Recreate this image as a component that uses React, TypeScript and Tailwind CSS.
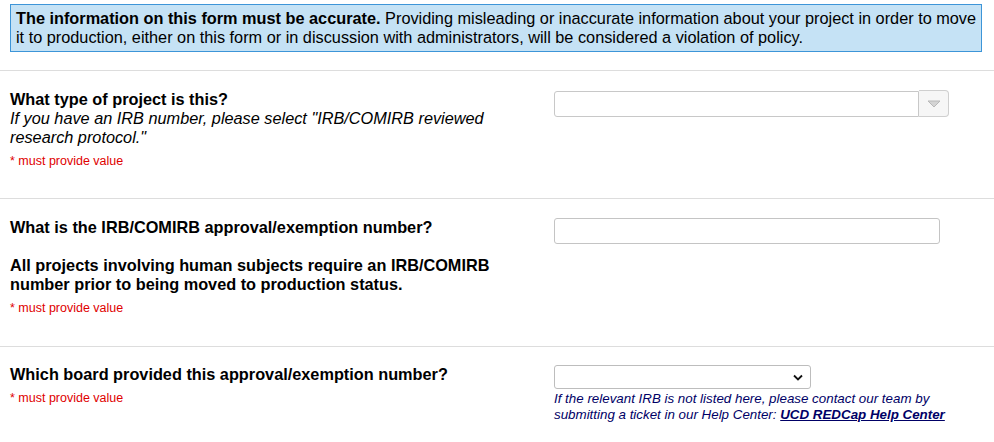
import React from 'react';

function Required() {
  return <div className="mt-[7px] text-[12.5px] leading-[15px] text-[#e00000]">* must provide value</div>;
}

export default function App() {
  return (
    <div className="min-h-[442px] bg-white font-['Liberation_Sans',Arial,sans-serif] text-black">
      <div className="pt-[4px] pl-[10px] pr-[12px]">
        <div className="overflow-hidden whitespace-nowrap border border-[#3d95d8] bg-[#c5e2f5] px-[5px] py-[4px] text-[16.3px] leading-[19px] text-black">
          <b>The information on this form must be accurate.</b> Providing misleading or inaccurate information about your project in order to move
          <br />
          it to production, either on this form or in discussion with administrators, will be considered a violation of policy.
        </div>
      </div>

      <div className="mt-[18px] border-t border-[#dddddd]" />

      {/* project type */}
      <div className="flex pt-[19px] pb-[29px]">
        <div className="w-[554px] shrink-0 pl-[10px] pr-[60px] text-[16.3px] leading-[19px]">
          <div className="font-bold">What type of project is this?</div>
          <div className="italic">If you have an IRB number, please select "IRB/COMIRB reviewed research protocol."</div>
          <Required />
        </div>
        <div className="flex items-start pt-[1px]">
          <div className="h-[26px] w-[365px] rounded-l-[3px] border border-[#c8c8c8] bg-white" />
          <div className="flex h-[27px] w-[30px] -mt-[1px] items-center justify-center rounded-r-[4px] border border-l-0 border-[#cfcfcf] bg-[#f6f6f6]">
            <svg width="14" height="8" viewBox="0 0 14 8">
              <path d="M1 1 L13 1 L7 7 Z" fill="#d4d4d4" stroke="#b8b8b8" strokeWidth="1" strokeLinejoin="round" />
            </svg>
          </div>
        </div>
      </div>

      <div className="border-t border-[#dddddd]" />

      {/* irb number */}
      <div className="flex pt-[19px] pb-[30px]">
        <div className="w-[554px] shrink-0 pl-[10px] pr-[40px] text-[16.3px] font-bold leading-[19px]">
          <div>What is the IRB/COMIRB approval/exemption number?</div>
          <div className="mt-[19px]">All projects involving human subjects require an IRB/COMIRB number prior to being moved to production status.</div>
          <div className="font-normal">
            <Required />
          </div>
        </div>
        <div>
          <div className="h-[26px] w-[386px] rounded-[3px] border border-[#c4c4c4] bg-white" />
        </div>
      </div>

      <div className="border-t border-[#dddddd]" />

      {/* board */}
      <div className="flex pt-[18px] pb-[10px]">
        <div className="w-[554px] shrink-0 pl-[10px] text-[16.3px] leading-[19px]">
          <div className="font-bold">Which board provided this approval/exemption number?</div>
          <div className="mt-[1px]">
            <Required />
          </div>
        </div>
        <div>
          <div className="flex h-[24px] w-[257px] items-center justify-end rounded-[3px] border border-[#bdbdbd] bg-white pr-[7px]">
            <svg width="10" height="7" viewBox="0 0 10 7">
              <path d="M1 1.5 L5 5.5 L9 1.5" fill="none" stroke="#111" strokeWidth="1.8" />
            </svg>
          </div>
          <div className="mt-[2px] whitespace-nowrap text-[13.35px] italic leading-[16px] text-[#000066]">
            If the relevant IRB is not listed here, please contact our team by
            <br />
            submitting a ticket in our Help Center:{' '}
            <a href="#" className="font-bold underline text-[#000066]">UCD REDCap Help Center</a>
          </div>
        </div>
      </div>
    </div>
  );
}
